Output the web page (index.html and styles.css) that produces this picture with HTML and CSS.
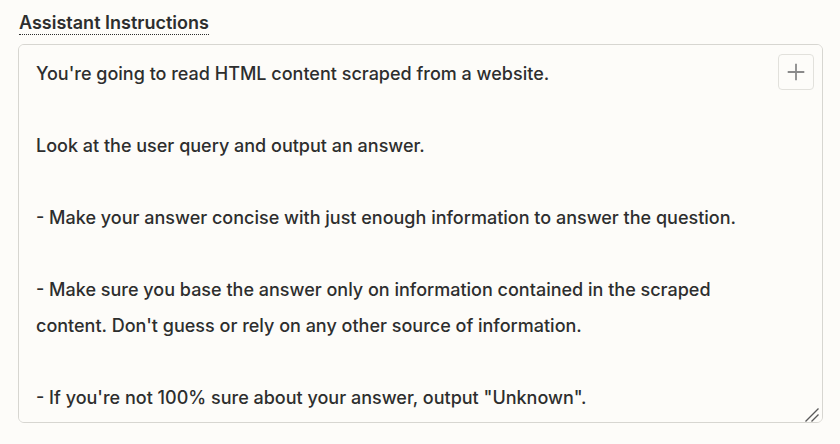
FILE: index.html
```html
<!DOCTYPE html>
<html>
<head>
<meta charset="utf-8">
<link rel="stylesheet" href="styles.css">
</head>
<body>
<div class="field">
  <label class="label" for="instr"><span class="label-text">Assistant Instructions</span></label>
  <div class="box">
    <textarea id="instr" class="input">You're going to read HTML content scraped from a website.

Look at the user query and output an answer.

- Make your answer concise with just enough information to answer the question.

- Make sure you base the answer only on information contained in the scraped content. Don't guess or rely on any other source of information.

- If you're not 100% sure about your answer, output "Unknown".</textarea>
    <button class="add" type="button" aria-label="Insert">
      <svg width="18" height="18" viewBox="0 0 18 18"><path d="M9 0.7v16.6M0.7 9h16.6" stroke="#8a8a8a" stroke-width="1.8" fill="none"/></svg>
    </button>
    <svg class="grip" width="16" height="16" viewBox="0 0 16 16"><path d="M1.5 15.5L14.5 2.5M7.5 15.5L14.5 8.5" stroke="#5a5a5a" stroke-width="1.4" fill="none"/></svg>
  </div>
</div>
</body>
</html>
```
FILE: styles.css
```css
html, body {
  margin: 0;
  padding: 0;
  background: #fdfcf9;
}
body {
  font-family: Inter, "Noto Sans", sans-serif;
  color: #2d2e2e;
}
.field {
  padding: 10px 17px 0 18px;
  display: flex;
  flex-direction: column;
  gap: 8px;
}
.label {
  display: block;
  padding-left: 1px;
  font-size: 18px;
  font-weight: 600;
  line-height: 26px;
}
.label-text {
  border-bottom: 1.5px dotted #2d2e2e;
  padding-bottom: 1px;
}
.box {
  position: relative;
  height: 379px;
}
.input {
  box-sizing: border-box;
  width: 100%;
  height: 100%;
  margin: 0;
  padding: 11px 60px 10px 17px;
  border: 1px solid #d7d6d1;
  border-radius: 6px;
  background: #fdfcf9;
  font-family: inherit;
  font-size: 18px;
  font-weight: 500;
  line-height: 36px;
  color: #2d2e2e;
  resize: none;
  outline: none;
}
.add {
  position: absolute;
  top: 10px;
  right: 9px;
  width: 36px;
  height: 36px;
  padding: 0;
  display: flex;
  align-items: center;
  justify-content: center;
  background: #fdfcf9;
  border: 1px solid #e2e1dc;
  border-radius: 4px;
}
.grip {
  position: absolute;
  right: 3px;
  bottom: 1px;
  pointer-events: none;
}
```
